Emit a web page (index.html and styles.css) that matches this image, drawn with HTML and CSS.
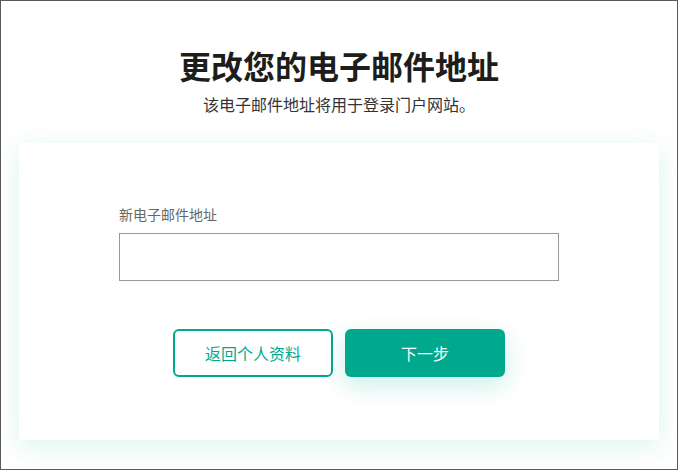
FILE: index.html
```html
<!DOCTYPE html>
<html lang="zh-CN">
<head>
<meta charset="utf-8">
<title>更改您的电子邮件地址</title>
<link rel="stylesheet" href="styles.css">
</head>
<body>
<div class="frame">
  <header class="head">
    <h1 class="title">更改您的电子邮件地址</h1>
    <p class="subtitle">该电子邮件地址将用于登录门户网站。</p>
  </header>
  <main class="card">
    <label class="label" for="email">新电子邮件地址</label>
    <input class="input" id="email" type="email">
    <div class="actions">
      <button class="btn btn-outline" type="button">返回个人资料</button>
      <button class="btn btn-primary" type="button">下一步</button>
    </div>
  </main>
</div>
</body>
</html>
```
FILE: styles.css
```css
* { box-sizing: border-box; }
html, body { margin: 0; padding: 0; background: #fff; }
body {
  font-family: "Noto Sans CJK SC", "Noto Sans", "Liberation Sans", sans-serif;
  color: #1e1e1e;
}
.frame {
  width: 678px;
  height: 470px;
  border: 1px solid #5a5a5a;
  padding: 44px 18px 0;
  display: flex;
  flex-direction: column;
  align-items: center;
  overflow: hidden;
}
.head { text-align: center; }
.title {
  margin: 0;
  font-size: 32px;
  line-height: 40px;
  font-weight: 700;
  color: #1d1d1b;
}
.subtitle {
  margin: 8px 0 0;
  font-size: 16px;
  line-height: 22px;
  font-weight: 400;
  color: #333;
}
.card {
  margin-top: 28px;
  width: 640px;
  padding: 61px 100px 63px;
  background: #fff;
  border-radius: 2px;
  box-shadow: 0 6px 28px rgba(0, 180, 150, 0.15);
  display: flex;
  flex-direction: column;
}
.label {
  font-size: 14px;
  line-height: 20px;
  color: #666;
}
.input {
  margin-top: 9px;
  width: 440px;
  height: 48px;
  border: 1px solid #999;
  border-radius: 0;
  padding: 0 12px;
  font: inherit;
  outline: none;
}
.actions {
  margin-top: 48px;
  display: flex;
  justify-content: center;
  gap: 12px;
}
.btn {
  width: 160px;
  height: 48px;
  border-radius: 6px;
  font-family: inherit;
  font-size: 16px;
  cursor: pointer;
}
.btn-outline {
  background: #fff;
  border: 2px solid #00a88e;
  color: #00a88e;
}
.btn-primary {
  background: #00a88e;
  border: none;
  color: #fff;
  box-shadow: 0 8px 24px rgba(0, 180, 150, 0.22);
}
```
